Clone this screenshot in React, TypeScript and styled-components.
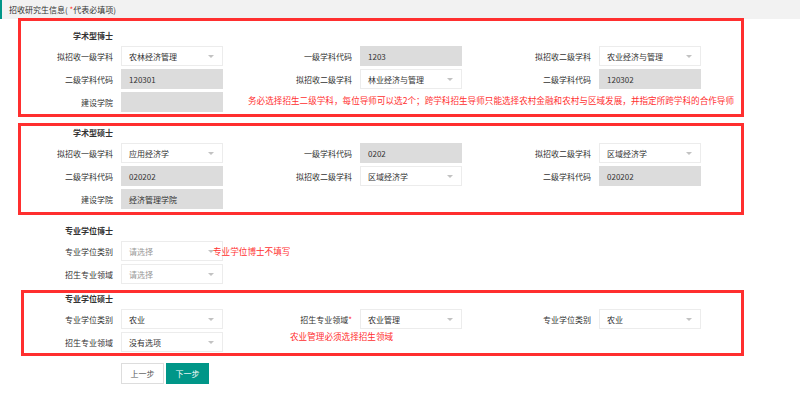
import styled, { createGlobalStyle } from "styled-components";

const GlobalStyle = createGlobalStyle`
  body {
    margin: 0;
    background: #fff;
    font-family: "Noto Sans CJK SC", "Noto Sans", sans-serif;
    color: #333;
  }
`;

const Header = styled.div`
  height: 19px;
  display: flex;
  align-items: center;
  padding-left: 7px;
  background: #f2f2f2;
  border-left: 2px solid #009688;
  font-size: 8px;
  color: #333;
  white-space: pre;
`;

const Star = styled.span`
  color: #ff2d2d;
`;

const Section = styled.div<{ $marked?: boolean; $left: number; $top: number; $pt: number; $pb: number }>`
  margin-top: ${(p) => p.$top}px;
  margin-left: ${(p) => p.$left}px;
  width: ${(p) => 744 - p.$left}px;
  box-sizing: border-box;
  border: 3px solid ${(p) => (p.$marked ? "#ff2f2f" : "transparent")};
  padding: ${(p) => p.$pt}px 0 ${(p) => p.$pb}px ${(p) => 25 - p.$left - 3}px;
  display: flex;
  flex-direction: column;
  gap: 3px;
`;

const Title = styled.div`
  width: 88px;
  height: 12px;
  line-height: 12px;
  margin-bottom: 1px;
  text-align: right;
  font-size: 8px;
  font-weight: bold;
  color: #333;
`;

const Row = styled.div`
  display: flex;
  align-items: center;
  height: 20px;
`;

const Field = styled.div`
  flex: 0 0 239px;
  display: flex;
  align-items: center;
`;

const Label = styled.div`
  width: 88px;
  margin-right: 8px;
  text-align: right;
  font-size: 8px;
  color: #333;
  white-space: nowrap;
`;

const Input = styled.div<{ $kind: "select" | "readonly" }>`
  position: relative;
  box-sizing: border-box;
  width: 102px;
  height: 20px;
  padding-left: 7px;
  display: flex;
  align-items: center;
  font-size: 8px;
  color: #333;
  background: ${(p) => (p.$kind === "readonly" ? "#dcdcdc" : "#fff")};
  border: 1px solid ${(p) => (p.$kind === "readonly" ? "#dcdcdc" : "#ececec")};

  ${(p) =>
    p.$kind === "select" &&
    `
    &::after {
      content: "";
      position: absolute;
      right: 8px;
      top: 8px;
      border-left: 3px solid transparent;
      border-right: 3px solid transparent;
      border-top: 3px solid #c2c2c2;
    }
  `}
`;

const Placeholder = styled.span`
  color: #999;
`;

const Note = styled.div<{ $shift: number; $lift?: number }>`
  position: relative;
  z-index: 1;
  margin-left: ${(p) => p.$shift}px;
  margin-top: ${(p) => -(p.$lift ?? 0)}px;
  font-size: 8.6px;
  color: #ff3030;
  white-space: nowrap;
`;

const Buttons = styled.div`
  display: flex;
  gap: 2px;
  margin: 7px 0 0 121px;
`;

const Button = styled.button<{ $primary?: boolean }>`
  width: 43px;
  height: 21px;
  padding: 0;
  font-family: inherit;
  font-size: 8px;
  border: 1px solid ${(p) => (p.$primary ? "#009688" : "#ddd")};
  background: ${(p) => (p.$primary ? "#009688" : "#fff")};
  color: ${(p) => (p.$primary ? "#fff" : "#555")};
  cursor: pointer;
`;

type FieldProps = { label: string; value?: string; kind?: "select" | "readonly"; required?: boolean };

const FormField = ({ label, value, kind = "select", required }: FieldProps) => (
  <Field>
    <Label>
      {label}
      {required && <Star>*</Star>}
    </Label>
    <Input $kind={kind}>{value ? value : <Placeholder>请选择</Placeholder>}</Input>
  </Field>
);

export default function App() {
  return (
    <>
      <GlobalStyle />
      <Header>
        {"招收研究生信息( "}
        <Star>*</Star>
        {"代表必填项)"}
      </Header>

      <Section $marked $left={18} $top={-1} $pt={9} $pb={2}>
        <Title>学术型博士</Title>
        <Row>
          <FormField label="拟招收一级学科" value="农林经济管理" />
          <FormField label="一级学科代码" value="1203" kind="readonly" />
          <FormField label="拟招收二级学科" value="农业经济与管理" />
        </Row>
        <Row>
          <FormField label="二级学科代码" value="120301" kind="readonly" />
          <FormField label="拟招收二级学科" value="林业经济与管理" />
          <FormField label="二级学科代码" value="120302" kind="readonly" />
        </Row>
        <Row>
          <FormField label="建设学院" value=" " kind="readonly" />
          <Note $shift={-16} $lift={4}>
            务必选择招生二级学科，每位导师可以选2个；跨学科招生导师只能选择农村金融和农村与区域发展，并指定所跨学科的合作导师
          </Note>
        </Row>
      </Section>

      <Section $marked $left={18} $top={6} $pt={1} $pb={3}>
        <Title>学术型硕士</Title>
        <Row>
          <FormField label="拟招收一级学科" value="应用经济学" />
          <FormField label="一级学科代码" value="0202" kind="readonly" />
          <FormField label="拟招收二级学科" value="区域经济学" />
        </Row>
        <Row>
          <FormField label="二级学科代码" value="020202" kind="readonly" />
          <FormField label="拟招收二级学科" value="区域经济学" />
          <FormField label="二级学科代码" value="020202" kind="readonly" />
        </Row>
        <Row>
          <FormField label="建设学院" value="经济管理学院" kind="readonly" />
        </Row>
      </Section>

      <Section $left={18} $top={0} $pt={7} $pb={9}>
        <Title>专业学位博士</Title>
        <Row>
          <FormField label="专业学位类别" />
          <Note $shift={-51}>专业学位博士不填写</Note>
        </Row>
        <Row>
          <FormField label="招生专业领域" />
        </Row>
      </Section>

      <Section $marked $left={21} $top={-6} $pt={0} $pb={1}>
        <Title>专业学位硕士</Title>
        <Row>
          <FormField label="专业学位类别" value="农业" />
          <FormField label="招生专业领域" value="农业管理" required />
          <FormField label="专业学位类别" value="农业" />
        </Row>
        <Row>
          <FormField label="招生专业领域" value="没有选项" />
          <Note $shift={26} $lift={12}>农业管理必须选择招生领域</Note>
        </Row>
      </Section>

      <Buttons>
        <Button>上一步</Button>
        <Button $primary>下一步</Button>
      </Buttons>
    </>
  );
}
